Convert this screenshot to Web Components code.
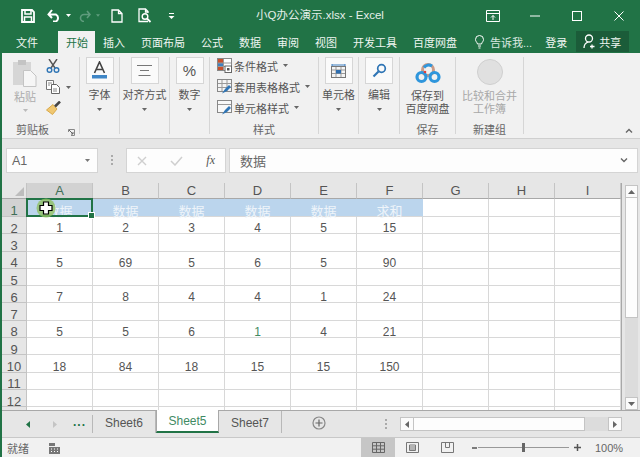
<!DOCTYPE html>
<html lang="zh">
<head>
<meta charset="utf-8">
<title>小Q办公演示.xlsx - Excel</title>
<style>
  html, body { margin: 0; height: 457px; overflow: hidden; background: #e6e6e6; }
  body { font-family: "Liberation Sans", "Noto Sans CJK SC", sans-serif; font-size: 11px; color: #555; }
  svg { display: block; }
</style>
</head>
<body>
<excel-app>
  <title-bar>
    <span slot="title">小Q办公演示.xlsx - Excel</span>
  </title-bar>

  <tab-strip>
    <tab-item>文件</tab-item>
    <tab-item active>开始</tab-item>
    <tab-item>插入</tab-item>
    <tab-item>页面布局</tab-item>
    <tab-item>公式</tab-item>
    <tab-item>数据</tab-item>
    <tab-item>审阅</tab-item>
    <tab-item>视图</tab-item>
    <tab-item>开发工具</tab-item>
    <tab-item>百度网盘</tab-item>
  </tab-strip>

  <ribbon-bar>
    <ribbon-group style="width:77px">
      <clip-board></clip-board>
      <span slot="label" style="display:block;position:relative;padding-right:16px">剪贴板<group-launcher style="position:absolute;right:4px;top:7px"></group-launcher></span>
    </ribbon-group>
    <ribbon-sep></ribbon-sep>

    <ribbon-group style="width:39px">
      <big-button>
        <svg slot="icon" width="17" height="19" viewBox="0 0 17 19"><path d="M3.500 12 8.500 1l5 11M5.300 8.500h6.400" fill="none" stroke="#444" stroke-width="1.600"/><rect x="1" y="14" width="15" height="3.500" fill="#3f86c6"/></svg>
        字体
      </big-button>
    </ribbon-group>
    <ribbon-sep></ribbon-sep>

    <ribbon-group style="width:49px">
      <big-button>
        <svg slot="icon" width="15" height="13" viewBox="0 0 15 13"><path d="M0 1.500h15M3 6.500h9M1.500 11.500h12" stroke="#777" stroke-width="1"/></svg>
        对齐方式
      </big-button>
    </ribbon-group>
    <ribbon-sep></ribbon-sep>

    <ribbon-group style="width:39px">
      <big-button>
        <span slot="icon" style="font:15px 'Liberation Sans',sans-serif;color:#555">%</span>
        数字
      </big-button>
    </ribbon-group>
    <ribbon-sep></ribbon-sep>

    <ribbon-group style="width:108px">
      <style-item>
        <svg slot="icon" width="15" height="15" viewBox="0 0 15 15"><rect x=".5" y=".5" width="14" height="12" fill="#fff" stroke="#888"/><rect x="1" y="1" width="5" height="4" fill="#c8502c"/><rect x="1" y="5" width="5" height="3" fill="#3f7fc0"/><rect x="1" y="8" width="5" height="4" fill="#c8502c"/><path d="M6.500 1v11M1 5h13M1 8.500h13" stroke="#999"/><rect x="8" y="8" width="6.500" height="6.500" fill="#fff" stroke="#666"/><rect x="10" y="10" width="2.500" height="2.500" fill="#555"/></svg>
        条件格式
      </style-item>
      <style-item>
        <svg slot="icon" width="15" height="15" viewBox="0 0 15 15"><rect x=".5" y=".5" width="14" height="12" fill="#f4f4f4" stroke="#888"/><path d="M5 1v11M10 1v11M1 4.500h13M1 8.500h13" stroke="#999"/><path d="M5 14.500 8 10l4-4 2 2-4 4z" fill="#2f75b5"/></svg>
        套用表格格式
      </style-item>
      <style-item>
        <svg slot="icon" width="15" height="15" viewBox="0 0 15 15"><rect x=".5" y=".5" width="14" height="12" fill="#f8f8f8" stroke="#888"/><path d="M1 4.500h13" stroke="#999"/><path d="M5 14.500 8 10l4-4 2 2-4 4z" fill="#2f75b5"/></svg>
        单元格样式
      </style-item>
      <span slot="label">样式</span>
    </ribbon-group>
    <ribbon-sep></ribbon-sep>

    <ribbon-group style="width:39px">
      <big-button>
        <svg slot="icon" width="15" height="16" viewBox="0 0 15 16"><path d="M1 1v2M14 1v2M1 2h13" stroke="#3f7fc0"/><rect x=".5" y="3.500" width="14" height="11" fill="#f4f4f4" stroke="#777"/><path d="M5 4v10M10 4v10M1 7h13M1 10.500h13" stroke="#999"/><rect x="5" y="7" width="5" height="3.500" fill="#2f6fb0"/></svg>
        单元格
      </big-button>
    </ribbon-group>
    <ribbon-sep></ribbon-sep>

    <ribbon-group style="width:40px">
      <big-button>
        <svg slot="icon" width="15" height="15" viewBox="0 0 15 15"><circle cx="9.500" cy="5.500" r="3.800" fill="none" stroke="#2f75b5" stroke-width="1.700"/><path d="M6.500 8.500 1.500 13.500" stroke="#2f75b5" stroke-width="2.200"/></svg>
        编辑
      </big-button>
    </ribbon-group>
    <ribbon-sep></ribbon-sep>

    <ribbon-group style="width:55px">
      <big-button plain>
        <svg slot="icon" width="26" height="21" viewBox="0 0 26 21"><circle cx="13" cy="7" r="5.500" fill="none" stroke="#c99a86" stroke-width="3"/><circle cx="6.500" cy="14" r="4.500" fill="none" stroke="#2f96dc" stroke-width="3.200"/><circle cx="19.500" cy="14" r="4.500" fill="none" stroke="#2f96dc" stroke-width="3.200"/><path d="M9 4.500A6 6 0 0 1 17 3" fill="none" stroke="#2f96dc" stroke-width="3"/><circle cx="10" cy="9" r="1.300" fill="#e0403a"/></svg>
        保存到<br>百度网盘
      </big-button>
      <span slot="label">保存</span>
    </ribbon-group>
    <ribbon-sep></ribbon-sep>

    <ribbon-group style="width:67px">
      <big-button plain faded>
        <svg slot="icon" width="26" height="26" viewBox="0 0 26 26"><circle cx="13" cy="13" r="12.500" fill="#e0e0e0" stroke="#cfcfcf"/></svg>
        比较和合并<br>工作簿
      </big-button>
      <span slot="label">新建组</span>
    </ribbon-group>
    <ribbon-sep></ribbon-sep>
  </ribbon-bar>

  <formula-bar>数据</formula-bar>
  <sheet-view></sheet-view>
  <sheet-tabs>
    <sheet-tab>Sheet6</sheet-tab>
    <sheet-tab active>Sheet5</sheet-tab>
    <sheet-tab>Sheet7</sheet-tab>
  </sheet-tabs>
  <status-bar>就绪</status-bar>
</excel-app>

<script>
// small helper: template + class with an open shadow root
function component(name, html, setup) {
  const tpl = document.createElement('template');
  tpl.innerHTML = html;
  customElements.define(name, class extends HTMLElement {
    constructor() {
      super();
      this.attachShadow({ mode: 'open' }).appendChild(tpl.content.cloneNode(true));
      if (setup) setup(this.shadowRoot);
    }
  });
}

const arrow = (c = '#666') => `<svg width="5" height="3" viewBox="0 0 5 3" style="display:block"><path d="M0 0h5L2.500 3z" fill="${c}"/></svg>`;

component('excel-app', `
  <style>
    :host { display: flex; flex-direction: column; width: 638px; height: 457px; border-left: 2px solid #217346; background: #e6e6e6; }
  </style>
  <slot></slot>`);

component('title-bar', `
  <style>
    :host { display: grid; grid-template-columns: 1fr auto 1fr; align-items: center; height: 31px; margin-left: -2px; background: #217346; color: #e4efe9; font-size: 11.500px; }
    .qa { display: flex; align-items: center; padding-left: 21px; }
    .win { display: flex; align-items: center; justify-content: flex-end; padding-right: 16px; }
    span { line-height: 31px; }
  </style>
  <div class="qa">
    <svg width="14" height="14" viewBox="0 0 14 14"><path d="M1 1h10l2 2v10H1z" fill="none" stroke="#fff" stroke-width="1.800"/><path d="M4 1.500v3.500h6V1.500M3.500 13V8h7v5" fill="none" stroke="#fff" stroke-width="1.500"/></svg>
    <svg style="margin-left:12px" width="15" height="13" viewBox="0 0 15 13"><path d="M1.500 5.500H9a4 4 0 0 1 0 7H6M5 1 1.500 5.500 5 9" fill="none" stroke="#fff" stroke-width="2"/></svg>
    <svg style="margin-left:4px" width="5" height="3" viewBox="0 0 5 3"><path d="M0 0h5L2.500 3z" fill="#fff"/></svg>
    <svg style="margin-left:7px" width="13" height="12" viewBox="0 0 13 12"><path d="M12 4.500H6a3.500 3.500 0 0 0 0 7M9 1l3 3.500L9 8" fill="none" stroke="#5f9c7d" stroke-width="1.600"/></svg>
    <svg style="margin-left:5px" width="4" height="3" viewBox="0 0 5 3"><path d="M0 0h5L2.500 3z" fill="#5f9c7d"/></svg>
    <svg style="margin-left:11px" width="12" height="14" viewBox="0 0 12 14"><path d="M1 1h6.500L11 4.500V13H1zM7.500 1v3.500H11" fill="none" stroke="#fff" stroke-width="1.300"/></svg>
    <svg style="margin-left:15px" width="14" height="15" viewBox="0 0 14 15"><path d="M10 13.500H1V1h6.500L10 3.500V5M7.500 1v3H10" fill="none" stroke="#fff" stroke-width="1.300"/><circle cx="7" cy="8.500" r="2.800" fill="none" stroke="#fff" stroke-width="1.400"/><path d="m9 10.500 3.500 3.500" stroke="#fff" stroke-width="1.800"/></svg>
    <svg style="margin-left:16px" width="7" height="6" viewBox="0 0 7 6"><path d="M1 .5h5" stroke="#fff"/><path d="M.5 3h6L3.500 6z" fill="#fff"/></svg>
  </div>
  <span><slot name="title"></slot></span>
  <div class="win">
    <svg width="14" height="12" viewBox="0 0 14 12"><path d="M.5 3.500h13M.5 .5h13v11H.5z" fill="none" stroke="#fff"/><path d="M7 10V5.500M5 7.500l2-2 2 2" fill="none" stroke="#fff"/></svg>
    <svg style="margin-left:30px" width="10" height="2" viewBox="0 0 10 2"><path d="M0 1h10" stroke="#fff"/></svg>
    <svg style="margin-left:32px" width="10" height="10" viewBox="0 0 10 10"><rect x=".5" y=".5" width="9" height="9" fill="none" stroke="#fff"/></svg>
    <svg style="margin-left:32px" width="10" height="10" viewBox="0 0 10 10"><path d="m.5.500 9 9M9.500.500l-9 9" stroke="#fff"/></svg>
  </div>`);

component('tab-strip', `
  <style>
    :host { display: flex; align-items: stretch; height: 22px; margin-left: -2px; padding-left: 8px; background: #217346; color: #f0f6f2; }
    .tell { display: flex; align-items: center; margin-left: 10px; gap: 6px; white-space: nowrap; color: #dbe9e1; }
    .login { margin-left: 13px; align-self: center; }
    .share { display: flex; align-items: center; gap: 3px; width: 53px; margin: 0 0 1px 9px; box-sizing: border-box; padding-left: 7px; background: #1b5c39; }
    svg { display: block; }
  </style>
  <slot></slot>
  <div class="tell">
    <svg width="9" height="14" viewBox="0 0 9 14"><path d="M2.500 9C2 7 .5 6.500.5 4.500a4 4 0 0 1 8 0C8.500 6.500 7 7 6.500 9zM3 11h3M3.500 13h2" fill="none" stroke="#fff"/></svg>
    <span>告诉我...</span>
  </div>
  <span class="login">登录</span>
  <div class="share">
    <svg width="13" height="15" viewBox="0 0 13 15"><circle cx="6" cy="4.500" r="3.500" fill="none" stroke="#fff" stroke-width="1.300"/><path d="M1 14c0-3 1.500-5 4-6M9 10.500v4M7 12.500h4.500" fill="none" stroke="#fff" stroke-width="1.300"/></svg>
    <span>共享</span>
  </div>`);

component('tab-item', `
  <style>
    :host { display: flex; align-items: center; padding: 0 8px; white-space: nowrap; }
    :host([active]) { margin-left: 12px; background: #f1f1f1; color: #217346; width: 22px; padding: 0 7px 0 8px; }
  </style>
  <slot></slot>`);

component('ribbon-bar', `
  <style>
    :host { display: flex; align-items: stretch; height: 85px; background: #f1f1f1; border-bottom: 1px solid #cfcfcf; position: relative; }
    svg { position: absolute; right: 7px; bottom: 5px; }
  </style>
  <slot></slot>
  <svg width="8" height="5" viewBox="0 0 8 5"><path d="m1 4.500 3-3 3 3" fill="none" stroke="#666" stroke-width="1.400"/></svg>`);

component('ribbon-sep', `
  <style>:host { display: block; width: 1px; margin: 4px 0; background: #d6d6d6; }</style>`);

component('ribbon-group', `
  <style>
    :host { display: flex; flex-direction: column; height: 85px; box-sizing: border-box; flex: none; }
    .body { flex: 1; min-height: 0; }
    .label { height: 16px; line-height: 16px; text-align: center; color: #666; white-space: nowrap; }
  </style>
  <div class="body"><slot></slot></div>
  <div class="label"><slot name="label"></slot></div>`);

component('big-button', `
  <style>
    :host { display: flex; flex-direction: column; align-items: center; padding-top: 4px; white-space: nowrap; }
    .box { display: flex; align-items: center; justify-content: center; box-sizing: border-box; width: 28px; height: 27px; background: #fafafa; border: 1px solid #d6d6d6; }
    .txt { margin-top: 4px; line-height: 14px; text-align: center; }
    .arr { margin-top: 6px; }
    :host([plain]) .box { background: none; border: 0; height: 33px; width: auto; }
    :host([plain]) .txt { margin-top: 0; line-height: 13px; }
    :host([plain]) .arr { display: none; }
    :host([faded]) .txt { color: #a8a8a8; }
    :host([faded]) .box { height: 30px; margin-bottom: 3px; }
  </style>
  <div class="box"><slot name="icon"></slot></div>
  <div class="txt"><slot></slot></div>
  <div class="arr">${arrow()}</div>`);

component('style-item', `
  <style>
    :host { display: flex; align-items: center; height: 21px; padding-left: 7px; gap: 2px; white-space: nowrap; }
    :host(:first-child) { margin-top: 2px; }
    .a { margin-left: 3px; }
  </style>
  <slot name="icon"></slot>
  <span><slot></slot></span>
  <span class="a">${arrow()}</span>`);

component('clip-board', `
  <style>
    :host { display: flex; padding: 6px 0 0 10px; }
    .paste { display: flex; flex-direction: column; align-items: center; width: 26px; color: #acacac; white-space: nowrap; }
    .paste span { margin-top: 3px; line-height: 14px; }
    .paste i { display: block; margin-top: 5px; }
    .small { display: flex; flex-direction: column; gap: 7px; margin-left: 8px; }
    .row { display: flex; align-items: center; gap: 5px; }
    svg { display: block; }
  </style>
  <div class="paste">
    <svg width="26" height="28" viewBox="0 0 26 28"><rect x="1" y="3" width="18" height="23" fill="#d6d6d6"/><rect x="6" y="1" width="8" height="5" fill="#c4c4c4"/><path d="M11.500 11.500h7l5.500 5.500v10.500H11.500z" fill="#f6f6f6" stroke="#c4c4c4"/></svg>
    <span>粘贴</span>
    <i>${arrow('#bbb')}</i>
  </div>
  <div class="small">
    <svg width="14" height="14" viewBox="0 0 14 14"><path d="M3 0l6 9M11 0 5 9" stroke="#555" stroke-width="1.400"/><circle cx="3.500" cy="11" r="2.300" fill="none" stroke="#2f75b5" stroke-width="1.400"/><circle cx="10.500" cy="11" r="2.300" fill="none" stroke="#2f75b5" stroke-width="1.400"/></svg>
    <div class="row">
      <svg width="15" height="14" viewBox="0 0 15 14"><path d="M.5.500h7v9h-7z" fill="#fff" stroke="#777"/><path d="M5.500 4.500h5l3 3v6h-8z" fill="#fff" stroke="#666"/><path d="M2 3h4M2 5h2M7 9h4M7 11h4" stroke="#888"/></svg>
      ${arrow()}
    </div>
    <svg width="15" height="14" viewBox="0 0 15 14"><path d="M.5 9 7 3.500l4 4.500-4.500 5.500z" fill="#f0c771" stroke="#d8a94a"/><path d="m9 5.500 5-5" stroke="#444" stroke-width="2.500"/></svg>
  </div>`);

// launcher of the clipboard group
component('group-launcher', `
  <style>:host { display: block; } svg { display: block; }</style>
  <svg width="7" height="7" viewBox="0 0 7 7"><path d="M.5 3V.5H6.500v6H3" fill="none" stroke="#888"/><path d="m1 1 4 4M5 3v2H3" fill="none" stroke="#666"/></svg>`);

component('formula-bar', `
  <style>
    :host { display: flex; align-items: flex-start; height: 44px; box-sizing: border-box; padding: 9px 2px 0 4px; background: #e6e6e6; }
    .box { box-sizing: border-box; height: 25px; background: #fdfdfd; border: 1px solid #d4d4d4; display: flex; align-items: center; }
    .name { width: 92px; padding: 0 7px 0 5px; justify-content: space-between; font-size: 12.500px; color: #666; }
    .dots { width: 2px; height: 10px; margin: 7px 13px 0 13px; background: repeating-linear-gradient(#aaa 0 2px, transparent 2px 4px); }
    .fx { width: 100px; padding: 0 10px; justify-content: space-between; margin-right: 3px; }
    .fx em { font: italic 12px "Liberation Serif", serif; color: #555; }
    .input { flex: 1; padding: 0 9px 0 10px; justify-content: space-between; font-size: 13px; color: #666; }
  </style>
  <div class="box name"><span>A1</span>${arrow('#777')}</div>
  <div class="dots"></div>
  <div class="box fx">
    <svg width="10" height="10" viewBox="0 0 10 10"><path d="m1 1 8 8M9 1 1 9" stroke="#cfcfcf" stroke-width="1.400"/></svg>
    <svg width="13" height="10" viewBox="0 0 13 10"><path d="m1 5 4 4 7-8" fill="none" stroke="#cfcfcf" stroke-width="1.500"/></svg>
    <em>fx</em>
  </div>
  <div class="box input"><slot></slot>
    <svg width="8" height="5" viewBox="0 0 8 5"><path d="m1 .5 3 3 3-3" fill="none" stroke="#666" stroke-width="1.400"/></svg>
  </div>`);

component('sheet-view', `
  <style>
    :host { display: flex; height: 228px; border-bottom: 1px solid #a8a8a8; box-sizing: border-box; }
    .grid { display: grid; grid-template-columns: 25px repeat(9, 66px); grid-template-rows: 16px 18px repeat(11, 17.300px) 1fr; width: 619px; overflow: hidden; background: #fff; border-right: 1px solid #a8a8a8; font-size: 12px; color: #555; }
    .c { display: flex; align-items: center; justify-content: center; box-sizing: border-box; border-right: 1px solid #d8d8d8; border-bottom: 1px solid #d8d8d8; position: relative; }
    .r { padding-top: 6px; }
    .h { background: #e6e6e6; font-size: 13px; color: #555; border-color: #c4c4c4; }
    .top { border-bottom-color: #a8a8a8; }
    .sel { background: #d2d2d2; color: #3f6f58; }
    .corner { background: #e6e6e6; border-right: 1px solid #c4c4c4; border-bottom: 1px solid #a8a8a8; position: relative; }
    .corner svg { display: block; position: absolute; right: 2px; bottom: 2px; }
    .blue { background: #bbd5ed; color: #eef4fa; font-size: 13px; border-right-color: #bbd5ed; border-bottom-color: #d8d8d8; }
    .green { color: #3f8a63; }
    .cur { position: absolute; inset: -1px; border: 2px solid #217346; z-index: 2; }
    .cur i { position: absolute; right: -4px; bottom: -4px; width: 5px; height: 5px; background: #217346; border: 1px solid #fff; }
    .mouse { position: absolute; left: 8px; top: -2px; z-index: 3; }
    .mouse svg { display: block; }
    .bar { flex: none; display: flex; flex-direction: column; width: 13px; margin: 2px 0 0 3px; }
    .btn { display: flex; align-items: center; justify-content: center; height: 13px; background: #fbfbfb; border: 1px solid #c4c4c4; box-sizing: border-box; }
    .thumb { height: 120px; background: #fdfdfd; border: 1px solid #c4c4c4; border-top: 0; box-sizing: border-box; }
    .track { flex: 1; background: #dcdcdc; }
  </style>
  <div class="grid"></div>
  <div class="bar">
    <div class="btn"><svg width="7" height="4" viewBox="0 0 7 4"><path d="M0 4h7L3.500 0z" fill="#666"/></svg></div>
    <div class="thumb"></div>
    <div class="track"></div>
    <div class="btn"><svg width="7" height="4" viewBox="0 0 7 4"><path d="M0 0h7L3.500 4z" fill="#666"/></svg></div>
  </div>`, root => {
  const grid = root.querySelector('.grid');
  const rows = { 2: [1, 2, 3, 4, 5, 15], 4: [5, 69, 5, 6, 5, 90], 6: [7, 8, 4, 4, 1, 24], 8: [5, 5, 6, 1, 4, 21], 10: [18, 84, 18, 15, 15, 150] };
  const first = ['数据', '数据', '数据', '数据', '数据', '求和'];
  const cell = (cls, text = '') => {
    const d = document.createElement('div');
    d.className = cls;
    d.textContent = text;
    grid.appendChild(d);
    return d;
  };
  const corner = cell('corner');
  corner.innerHTML = '<svg width="9" height="9" viewBox="0 0 9 9"><path d="M9 0v9H0z" fill="#bdbdbd"/></svg>';
  'ABCDEFGHI'.split('').forEach((l, i) => cell('c h top' + (i === 0 ? ' sel' : ''), l));
  for (let r = 1; r <= 13; r++) {
    cell('c r h' + (r === 1 ? ' sel' : ''), r < 13 ? r : '');
    for (let c = 0; c < 9; c++) {
      if (r === 1 && c < 6) {
        const d = cell('c r blue', first[c]);
        if (c === 0) {
          const cur = document.createElement('div');
          cur.className = 'cur';
          cur.innerHTML = '<i></i>';
          d.appendChild(cur);
          const m = document.createElement('div');
          m.className = 'mouse';
          m.innerHTML = '<svg width="22" height="22" viewBox="0 0 22 22"><circle cx="11" cy="11" r="9.500" fill="#8fbf62" fill-opacity=".8"/><path d="M8.500 5h5v3.500H17v5h-3.500V17h-5v-3.500H5v-5h3.500z" fill="#fff" stroke="#000" stroke-width="1.200"/></svg>';
          d.appendChild(m);
        }
      } else {
        const v = rows[r] && c < 6 ? rows[r][c] : '';
        cell('c r' + (r === 8 && c === 3 ? ' green' : ''), v);
      }
    }
  }
});

component('sheet-tabs', `
  <style>
    :host { display: flex; align-items: stretch; height: 26px; background: #e6e6e6; box-sizing: border-box; }
    .nav { display: flex; align-items: center; width: 91px; box-sizing: border-box; padding-left: 24px; border-right: 1px solid #b8b8b8; margin: 4px 0; }
    .nav b { font: bold 12px "Liberation Sans", sans-serif; color: #217346; margin: -5px 0 0 16px; letter-spacing: 1px; }
    .plus { margin: 5px 0 0 30px; }
    .dots { width: 2px; height: 10px; margin: 8px 0 0 59px; background: repeating-linear-gradient(#aaa 0 2px, transparent 2px 4px); }
    .hs { display: flex; width: 222px; height: 14px; margin: 6px 0 0 13px; box-sizing: border-box; }
    .hs div { box-sizing: border-box; }
    .b { display: flex; align-items: center; justify-content: center; width: 14px; background: #fbfbfb; border: 1px solid #c4c4c4; }
    .t { width: 171px; background: #fdfdfd; border: 1px solid #c4c4c4; border-left: 0; }
    .r { flex: 1; background: #dcdcdc; }
  </style>
  <div class="nav">
    <svg width="4" height="7" viewBox="0 0 4 7"><path d="M4 0v7L0 3.500z" fill="#217346"/></svg>
    <svg style="margin-left:23px" width="4" height="7" viewBox="0 0 4 7"><path d="M0 0v7l4-3.500z" fill="#c4c4c4"/></svg>
    <b>...</b>
  </div>
  <slot></slot>
  <div class="plus">
    <svg width="14" height="14" viewBox="0 0 14 14"><circle cx="7" cy="7" r="6" fill="none" stroke="#888" stroke-width="1.200"/><path d="M7 3.500v7M3.500 7h7" stroke="#666" stroke-width="1.200"/></svg>
  </div>
  <div class="dots"></div>
  <div class="hs">
    <div class="b"><svg width="4" height="7" viewBox="0 0 4 7"><path d="M4 0v7L0 3.500z" fill="#666"/></svg></div>
    <div class="t"></div>
    <div class="r"></div>
    <div class="b"><svg width="4" height="7" viewBox="0 0 4 7"><path d="M0 0v7l4-3.500z" fill="#666"/></svg></div>
  </div>`);

component('sheet-tab', `
  <style>
    :host { display: flex; align-items: center; justify-content: center; width: 63px; height: 22px; margin-bottom: 4px; padding-top: 1px; box-sizing: border-box; font-size: 12px; color: #555; border-right: 1px solid #b8b8b8; }
    :host([active]) { height: 23px; margin-top: -1px; background: #fff; color: #3f8a63; border-left: 1px solid #a8a8a8; border-right: 1px solid #a8a8a8; border-bottom: 2px solid #217346; }
  </style>
  <slot></slot>`);

component('status-bar', `
  <style>
    :host { display: flex; align-items: center; height: 20px; box-sizing: border-box; padding-left: 5px; background: #f1f1f1; border-top: 1px solid #c8c8c8; color: #666; }
    .macro { display: block; margin-left: 19px; }
    .view { display: flex; align-items: center; justify-content: center; align-self: stretch; }
    .n { width: 34px; margin-left: 301px; background: #c6c6c6; }
    .zoom { display: flex; align-items: center; margin-left: 18px; }
    .line { position: relative; width: 91px; height: 1px; margin: 0 5px 0 1px; background: #999; }
    .line i { position: absolute; left: 44px; top: -4px; width: 3px; height: 9px; background: #666; }
    .pct { margin-left: 14px; font-size: 11px; color: #666; }
  </style>
  <span><slot></slot></span>
  <svg class="macro" width="12" height="12" viewBox="0 0 12 12"><rect x="1" y="5" width="11" height="7" fill="#777"/><rect x="1" y="1" width="6" height="3" fill="#777"/><path d="M3 7h1M6 7h1M9 7h1M3 9.500h1M6 9.500h1M9 9.500h1" stroke="#fff"/></svg>
  <div class="view n"><svg width="13" height="11" viewBox="0 0 13 11"><path d="M.5.500h12v10H.5zM4.500.500v10M8.500.500v10M.5 3.800h12M.5 7.200h12" fill="none" stroke="#666"/></svg></div>
  <div class="view" style="margin-left:11px"><svg width="13" height="11" viewBox="0 0 13 11"><path d="M.5.500h12v10H.5zM3.500 3h6v5.500h-6zM3.500 5h6M3.500 7h6" fill="none" stroke="#777"/></svg></div>
  <div class="view" style="margin-left:22px"><svg width="13" height="11" viewBox="0 0 13 11"><path d="M.5.500h12v10H.5zM4.500.500v5h4v-5" fill="none" stroke="#777"/></svg></div>
  <div class="zoom">
    <svg width="5" height="2" viewBox="0 0 5 2"><path d="M0 1h5" stroke="#555" stroke-width="1.500"/></svg>
    <div class="line"><i></i></div>
    <svg width="7" height="7" viewBox="0 0 7 7"><path d="M0 3.500h7M3.500 0v7" stroke="#555" stroke-width="1.500"/></svg>
  </div>
  <span class="pct">100%</span>`);
</script>
</body>
</html>
